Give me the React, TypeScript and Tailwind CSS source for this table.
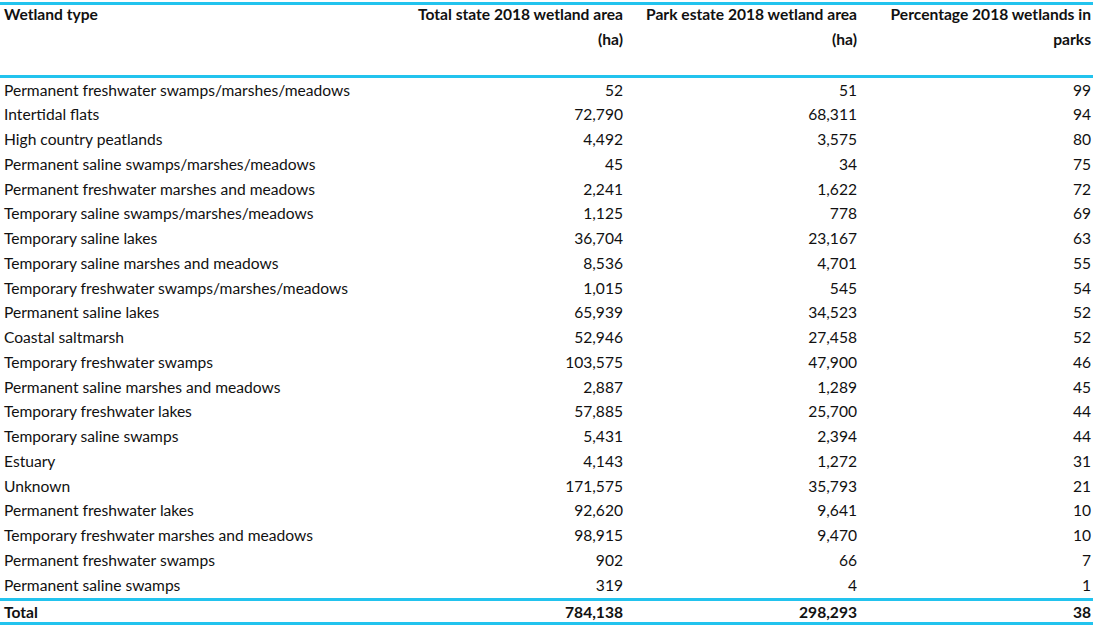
import React from "react";

const rows: [string, string, string, string][] = [
  ["Permanent freshwater swamps/marshes/meadows", "52", "51", "99"],
  ["Intertidal flats", "72,790", "68,311", "94"],
  ["High country peatlands", "4,492", "3,575", "80"],
  ["Permanent saline swamps/marshes/meadows", "45", "34", "75"],
  ["Permanent freshwater marshes and meadows", "2,241", "1,622", "72"],
  ["Temporary saline swamps/marshes/meadows", "1,125", "778", "69"],
  ["Temporary saline lakes", "36,704", "23,167", "63"],
  ["Temporary saline marshes and meadows", "8,536", "4,701", "55"],
  ["Temporary freshwater swamps/marshes/meadows", "1,015", "545", "54"],
  ["Permanent saline lakes", "65,939", "34,523", "52"],
  ["Coastal saltmarsh", "52,946", "27,458", "52"],
  ["Temporary freshwater swamps", "103,575", "47,900", "46"],
  ["Permanent saline marshes and meadows", "2,887", "1,289", "45"],
  ["Temporary freshwater lakes", "57,885", "25,700", "44"],
  ["Temporary saline swamps", "5,431", "2,394", "44"],
  ["Estuary", "4,143", "1,272", "31"],
  ["Unknown", "171,575", "35,793", "21"],
  ["Permanent freshwater lakes", "92,620", "9,641", "10"],
  ["Temporary freshwater marshes and meadows", "98,915", "9,470", "10"],
  ["Permanent freshwater swamps", "902", "66", "7"],
  ["Permanent saline swamps", "319", "4", "1"],
];

export default function App() {
  return (
    <div
      className="w-[1095px] h-[631px] bg-white text-[#111] text-[15.6px]"
      style={{ fontFamily: 'Lato, "Open Sans", sans-serif' }}
    >
      <div className="pt-[2px] w-[1093px]">
        <div className="border-t-[3px] border-b-[3px] border-[#22c3ee] grid grid-cols-[393px_234px_234px_232px] h-[76px] font-bold leading-[25px]">
          <div className="pl-[4px] -mt-[3px]">Wetland type</div>
          <div className="pr-[4px] -mt-[3px] text-right">Total state 2018 wetland area<br />(ha)</div>
          <div className="pr-[4px] -mt-[3px] text-right">Park estate 2018 wetland area<br />(ha)</div>
          <div className="pr-[2px] -mt-[3px] text-right">Percentage 2018 wetlands in<br />parks</div>
        </div>
        {rows.map((r) => (
          <div key={r[0]} className="grid grid-cols-[393px_234px_234px_232px] h-[24.75px] items-center">
            <div className="pl-[4px] whitespace-nowrap">{r[0]}</div>
            <div className="pr-[4px] text-right">{r[1]}</div>
            <div className="pr-[4px] text-right">{r[2]}</div>
            <div className="pr-[2px] text-right">{r[3]}</div>
          </div>
        ))}
        <div className="border-t-[3px] border-b-[3px] border-[#22c3ee] grid grid-cols-[393px_234px_234px_232px] h-[27px] items-center font-bold">
          <div className="pl-[4px]">Total</div>
          <div className="pr-[4px] text-right">784,138</div>
          <div className="pr-[4px] text-right">298,293</div>
          <div className="pr-[2px] text-right">38</div>
        </div>
      </div>
    </div>
  );
}
